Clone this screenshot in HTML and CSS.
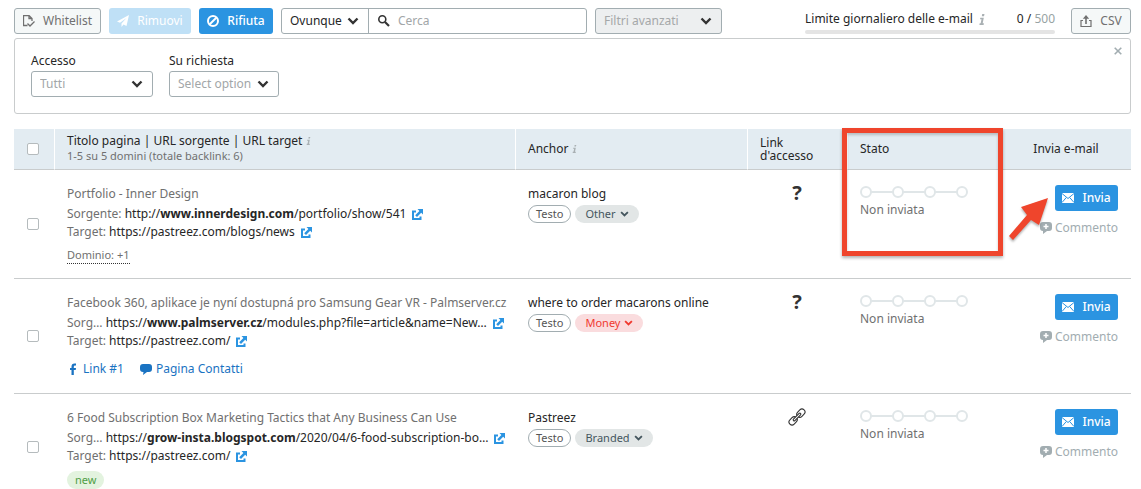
FILE: index.html
```html
<!DOCTYPE html>
<html lang="it">
<head>
<meta charset="utf-8">
<title>Link building</title>
<link rel="stylesheet" href="styles.css">
</head>
<body>
<svg class="defs" aria-hidden="true">
  <symbol id="chevron" viewBox="0 0 12 8"><path d="M1.500 1.500 6 6l4.500-4.500" fill="none" stroke="currentColor" stroke-width="2.400"/></symbol>
  <symbol id="external" viewBox="0 0 11 11"><path d="M4 2.500H1V10h7.500V7.500" fill="none" stroke="currentColor" stroke-width="2"/><path d="M5.500 0H11v5.500L9.200 3.700 5 8 3.200 6.200l4.200-4.300z" fill="currentColor"/></symbol>
  <symbol id="mail" viewBox="0 0 12 10"><path d="M0 0h12v10H0z" fill="currentColor"/><path d="M0 .5 6 5.500 12 .5M0 9.500l4.300-5M12 9.500l-4.300-5" fill="none" stroke="#2b94e1"/></symbol>
  <symbol id="comment" viewBox="0 0 12 12"><path d="M3 0h6q3 0 3 3v3q0 3-3 3H7l-4 3V9Q0 9 0 6V3q0-3 3-3z" fill="currentColor"/><path d="M6 2v5M3.500 4.500h5" stroke="#fff" stroke-width="1.500"/></symbol>
  <symbol id="steps" viewBox="0 0 108 12"><path d="M11 6h22M43 6h22M75 6h22" stroke="#e0e6e8" stroke-width="2"/><g fill="#fff" stroke="#e0e6e8" stroke-width="2"><circle cx="6" cy="6" r="5"/><circle cx="38" cy="6" r="5"/><circle cx="70" cy="6" r="5"/><circle cx="102" cy="6" r="5"/></g></symbol>
  <symbol id="info" viewBox="0 0 6 11"><path d="M3.200 0h2.300L5 2.200H2.800zM1.300 3.700h3.500L3.700 9.300h1.200L4.600 11H.4l.3-1.700h1l.8-4H1z" fill="currentColor"/></symbol>
</svg>

<header class="toolbar">
  <button class="btn btn-grey" type="button">
    <svg class="ico" viewBox="0 0 12 12"><path d="M4.500 10.500h-4V.5H6l3 3V6M6 .5v3h3M4.500 8.500 7 11l4.500-4.500" fill="none" stroke="currentColor" stroke-width="1.300"/></svg>Whitelist</button>
  <button class="btn btn-pale" type="button">
    <svg class="ico" viewBox="0 0 12 12"><path d="M12 0 0 6.500l3 1.300L9.500 3 4.500 8.500V12l2-2.500 3 1.500z" fill="currentColor"/></svg>Rimuovi</button>
  <button class="btn btn-blue" type="button">
    <svg class="ico" viewBox="0 0 12 12"><circle cx="6" cy="6" r="5" fill="none" stroke="currentColor" stroke-width="2"/><path d="m2.500 9.500 7-7" stroke="currentColor" stroke-width="2"/></svg>Rifiuta</button>
  <div class="search">
    <span class="drop drop-where"><select aria-label="Dove cercare"><option>Ovunque</option></select><svg class="chev"><use href="#chevron"/></svg></span>
    <label class="search-box"><svg class="search-ico" viewBox="0 0 12 12"><circle cx="4.300" cy="4.300" r="3.500" fill="none" stroke="currentColor" stroke-width="1.600"/><path d="m7 7 4 4" stroke="currentColor" stroke-width="2.200"/></svg><input type="text" placeholder="Cerca" aria-label="Cerca"></label>
  </div>
  <button class="btn btn-filter" type="button" aria-expanded="true">Filtri avanzati<svg class="chev"><use href="#chevron"/></svg></button>
  <div class="limit">
    <div class="limit-text"><span>Limite giornaliero delle e-mail</span><svg class="info"><use href="#info"/></svg><span class="limit-count">0 / <span class="muted">500</span></span></div>
    <div class="limit-bar"></div>
  </div>
  <button class="btn btn-grey btn-csv" type="button">
    <svg class="ico" viewBox="0 0 12 12"><path d="M3 5.500H1v6h10v-6H9" fill="none" stroke="currentColor" stroke-width="1.200"/><path d="M6 0 2.800 3.800h2.400V9h1.600V3.800h2.400z" fill="currentColor"/></svg>CSV</button>
</header>

<section class="filters">
  <div class="field field-access"><label for="access">Accesso</label>
    <span class="drop"><select id="access"><option>Tutti</option></select><svg class="chev"><use href="#chevron"/></svg></span></div>
  <div class="field field-request"><label for="request">Su richiesta</label>
    <span class="drop"><select id="request"><option>Select option</option></select><svg class="chev"><use href="#chevron"/></svg></span></div>
  <button class="close" type="button" aria-label="Chiudi"><svg viewBox="0 0 8 8"><path d="m.7.7 6.600 6.600M7.300.7.7 7.300" stroke="currentColor" stroke-width="1.600"/></svg></button>
</section>

<main class="results">
<table>
  <colgroup><col class="c-check"><col><col class="c-anchor"><col class="c-link"><col class="c-status"><col class="c-send"></colgroup>
  <thead>
    <tr>
      <th class="check"><input type="checkbox" aria-label="Seleziona tutti"></th>
      <th><div class="head-title">Titolo pagina | URL sorgente | URL target <svg class="info info-small"><use href="#info"/></svg></div><div class="head-sub">1-5 su 5 domini (totale backlink: 6)</div></th>
      <th>Anchor <svg class="info info-small"><use href="#info"/></svg></th>
      <th class="head-link"><div>Link</div><div>d'accesso</div></th>
      <th>Stato</th>
      <th class="head-send">Invia e-mail</th>
    </tr>
  </thead>
  <tbody>
    <tr>
      <td class="check"><input type="checkbox" aria-label="Seleziona Inner Design"></td>
      <td>
        <div class="title">Portfolio - Inner Design</div>
        <div class="url"><span>Sorgente:</span> http://<b>www.innerdesign.com</b>/portfolio/show/541<a href="#" aria-label="Apri"><svg class="ext"><use href="#external"/></svg></a></div>
        <div class="url"><span>Target:</span> https://pastreez.com/blogs/news<a href="#" aria-label="Apri"><svg class="ext"><use href="#external"/></svg></a></div>
        <div class="extra"><button class="domain" type="button">Dominio: +1</button></div>
      </td>
      <td><div class="anchor">macaron blog</div><div class="pills"><span class="pill pill-text">Testo</span><button class="pill" type="button">Other<svg class="chev-small"><use href="#chevron"/></svg></button></div></td>
      <td class="access"><span class="question">?</span></td>
      <td><svg class="steps"><use href="#steps"/></svg><div class="status">Non inviata</div></td>
      <td class="send"><button class="btn btn-blue btn-send" type="button"><svg class="mail"><use href="#mail"/></svg>Invia</button><button class="comment" type="button"><svg><use href="#comment"/></svg>Commento</button></td>
    </tr>
    <tr>
      <td class="check"><input type="checkbox" aria-label="Seleziona Palmserver"></td>
      <td>
        <div class="title">Facebook 360, aplikace je nyní dostupná pro Samsung Gear VR - Palmserver.cz</div>
        <div class="url"><span>Sorg…</span> https://<b>www.palmserver.cz</b>/modules.php?file=article&amp;name=New…<a href="#" aria-label="Apri"><svg class="ext"><use href="#external"/></svg></a></div>
        <div class="url"><span>Target:</span> https://pastreez.com/<a href="#" aria-label="Apri"><svg class="ext"><use href="#external"/></svg></a></div>
        <div class="contacts">
          <a href="#"><svg viewBox="0 0 12 12"><path d="M4.500 12V7H3V5h1.500V3.500Q4.500.5 7.500.5H9v2H8q-1.200 0-1.200 1.200V5H9L8.700 7H6.800v5z" fill="currentColor"/></svg>Link #1</a>
          <a href="#"><svg viewBox="0 0 12 12"><path d="M3 1h6q3 0 3 3v2q0 3-3 3H7l-4 3 .5-3H3Q0 9 0 6V4q0-3 3-3z" fill="currentColor"/></svg>Pagina Contatti</a>
        </div>
      </td>
      <td><div class="anchor">where to order macarons online</div><div class="pills"><span class="pill pill-text">Testo</span><button class="pill pill-money" type="button">Money<svg class="chev-small"><use href="#chevron"/></svg></button></div></td>
      <td class="access"><span class="question">?</span></td>
      <td><svg class="steps"><use href="#steps"/></svg><div class="status">Non inviata</div></td>
      <td class="send"><button class="btn btn-blue btn-send" type="button"><svg class="mail"><use href="#mail"/></svg>Invia</button><button class="comment" type="button"><svg><use href="#comment"/></svg>Commento</button></td>
    </tr>
    <tr>
      <td class="check"><input type="checkbox" aria-label="Seleziona grow-insta"></td>
      <td>
        <div class="title">6 Food Subscription Box Marketing Tactics that Any Business Can Use</div>
        <div class="url"><span>Sorg…</span> https://<b>grow-insta.blogspot.com</b>/2020/04/6-food-subscription-bo…<a href="#" aria-label="Apri"><svg class="ext"><use href="#external"/></svg></a></div>
        <div class="url"><span>Target:</span> https://pastreez.com/<a href="#" aria-label="Apri"><svg class="ext"><use href="#external"/></svg></a></div>
        <div class="extra"><span class="pill pill-new">new</span></div>
      </td>
      <td><div class="anchor">Pastreez</div><div class="pills"><span class="pill pill-text">Testo</span><button class="pill" type="button">Branded<svg class="chev-small"><use href="#chevron"/></svg></button></div></td>
      <td class="access"><svg class="chain" viewBox="0 0 18 18"><g fill="none" stroke="#333" stroke-width="1.100" transform="rotate(-45 9 9)"><rect x="-1" y="6" width="9" height="6" rx="3"/><rect x="10" y="6" width="9" height="6" rx="3"/><rect x="4" y="8" width="10" height="2" rx="1" fill="#fff"/></g></svg></td>
      <td><svg class="steps"><use href="#steps"/></svg><div class="status">Non inviata</div></td>
      <td class="send"><button class="btn btn-blue btn-send" type="button"><svg class="mail"><use href="#mail"/></svg>Invia</button><button class="comment" type="button"><svg><use href="#comment"/></svg>Commento</button></td>
    </tr>
  </tbody>
</table>
<div class="mark-box"></div>
<svg class="mark-arrow" viewBox="0 0 44 46"><path d="M41 3 14 12l6 8L2 41l4 4 18-20 8 5z" fill="#ef452c"/></svg>
</main>
</body>
</html>
```
FILE: styles.css
```css
* { box-sizing: border-box; }
html { overflow: hidden; }
body {
  margin: 0;
  padding: 8px 10px 0 14px;
  background: #fff;
  color: #262626;
  font: 12px/18px "Noto Sans", "Open Sans", sans-serif;
}
svg { display: block; flex: none; }
button, input, select { font: inherit; color: inherit; margin: 0; }
button { padding: 0; border: 0; background: none; cursor: pointer; }
a { color: #1a73c2; text-decoration: none; }
.defs { position: absolute; width: 0; height: 0; }

.toolbar { display: flex; gap: 8px; }
.btn {
  display: inline-flex;
  align-items: center;
  justify-content: center;
  gap: 8px;
  height: 26px;
  border-radius: 3px;
  padding: 0 8px;
  white-space: nowrap;
}
.ico { width: 12px; height: 12px; }
.btn-grey { border: 1px solid #a2adb1; background: #f5f8f8; color: #707070; width: 87px; }
.btn-pale { background: #bfe0f6; color: #fff; width: 82px; }
.btn-blue { background: #2b94e1; color: #fff; width: 74px; font-weight: 500; }
.btn-filter { border: 1px solid #a2adb1; background: #edeff0; color: #a5a8a9; width: 127px; justify-content: space-between; padding: 0 9px 0 8px; }
.btn-csv { width: 60px; margin-left: 8px; }
.chev { width: 12px; height: 8px; color: #333; }

.search { display: flex; width: 306px; height: 26px; border: 1px solid #a2adb1; border-radius: 3px; }
.drop { display: grid; align-items: center; }
.drop > * { grid-area: 1 / 1; }
.drop select { appearance: none; width: 100%; height: 100%; border: 0; background: none; padding: 0 24px 0 8px; outline: 0; }
.drop .chev { justify-self: end; margin-right: 9px; pointer-events: none; }
.drop-where { width: 87px; border-right: 1px solid #a2adb1; }
.search-box { display: flex; flex: 1; align-items: center; gap: 8px; padding-left: 9px; min-width: 0; }
.search-ico { width: 12px; height: 12px; color: #333; }
.search-box input { flex: 1; min-width: 0; border: 0; padding: 0; outline: 0; background: none; }
.search-box input::placeholder { color: #a2a6a8; opacity: 1; }

.limit { width: 250px; margin-left: auto; padding-top: 2px; }
.limit-text { display: flex; align-items: center; gap: 6px; white-space: nowrap; }
.limit-count { margin-left: auto; }
.limit-bar { height: 4px; margin-top: 2px; border-radius: 2px; background: #e4e4e4; }
.muted { color: #97a3a3; }
.info { width: 6px; height: 11px; color: #a9b0b3; }
.info-small { display: inline-block; width: 5px; height: 8px; }

.filters {
  position: relative;
  display: flex;
  gap: 16px;
  margin-top: 4px;
  padding: 13px 16px 16px;
  border: 1px solid #c9cccd;
  border-radius: 3px;
}
.field label { display: block; height: 19px; }
.field .drop { height: 26px; border: 1px solid #a2adb1; border-radius: 3px; color: #a2a6a8; }
.field-access { width: 122px; }
.field-request { width: 110px; }
.close { position: absolute; top: 8px; right: 8px; color: #a2adb1; }
.close svg { width: 8px; height: 8px; }

.results { position: relative; margin-top: 15px; }
table { width: 100%; table-layout: fixed; border-spacing: 0; }
.c-check { width: 41px; }
.c-anchor { width: 232px; }
.c-link { width: 100px; }
.c-status { width: 153px; }
.c-send { width: 130px; }
th {
  height: 41px;
  padding: 0 12px;
  background: #e3ecf2;
  border-bottom: 1px solid #c9cccd;
  border-right: 1px solid #fff;
  text-align: left;
  font-weight: 400;
}
th:last-child { border-right: 0; }
.head-title { line-height: 16px; }
.head-sub { font-size: 11px; line-height: 14px; padding-bottom: 2px; color: #707070; }
.head-link { line-height: 13px; }
.head-send { text-align: center; }
td { vertical-align: top; padding: 15px 12px 12px; border-bottom: 1px solid #c9cccd; white-space: nowrap; }
th.check, td.check { vertical-align: middle; padding: 0 0 1px 13px; }
.check input { display: block; appearance: none; width: 12px; height: 12px; border: 1px solid #b5bbbd; border-radius: 2px; background: #fff; }

.title { color: #707070; margin-bottom: 2px; }
.url { display: flex; align-items: center; white-space: pre; }
.url span { color: #707070; }
.url a { margin-left: 6px; color: #2b94e1; }
.ext { width: 11px; height: 11px; }
.extra { margin-top: 6px; display: flex; }
.domain { font-size: 11px; line-height: 16px; color: #707070; border-bottom: 1px dotted #333; margin-bottom: 2px; }
.contacts { display: flex; gap: 16px; margin: 8px 0 2px; line-height: 21px; }
.contacts a { display: flex; align-items: center; gap: 4px; }
.contacts svg { width: 12px; height: 12px; }

.anchor { margin-bottom: 2px; }
.pills { display: flex; gap: 4px; }
.pill { display: inline-flex; align-items: center; gap: 4px; height: 18px; padding: 0 10px; border-radius: 9px; background: #e2e6e6; color: #45565e; font-size: 11px; line-height: 16px; }
.pill-text { padding: 0 7px; border: 1px solid #a2adb1; background: #fff; color: #555; }
.pill-money { background: #fadcde; color: #f0392f; }
.pill-new { background: #e3f3df; color: #4f9e45; padding: 0 8px; }
.chev-small { width: 9px; height: 6px; }
.access { text-align: center; padding: 14px 2px 12px 0; }
.question { font-size: 20px; font-weight: 700; color: #333; }
.chain { width: 18px; height: 18px; margin: 0 auto; }
.steps { width: 108px; height: 12px; margin-top: 1px; }
.status { margin-top: 3px; color: #707070; }
.send { padding-right: 13px; }
.btn-send { display: flex; width: 63px; margin-left: auto; }
.mail { width: 12px; height: 10px; }
.comment { display: flex; align-items: center; gap: 3px; margin: 8px 0 0 auto; color: #a2adb1; line-height: 18px; }
.comment svg { width: 12px; height: 12px; }

.mark-box { position: absolute; top: -1px; right: 128px; width: 161px; height: 128px; border: 5px solid #ef452c; box-shadow: 0 2px 3px rgba(0, 0, 0, .3), inset 0 2px 3px rgba(0, 0, 0, .2); pointer-events: none; }
.mark-arrow { position: absolute; top: 66px; right: 80px; width: 44px; height: 46px; filter: drop-shadow(0 2px 1px rgba(0, 0, 0, .3)); pointer-events: none; }
```
